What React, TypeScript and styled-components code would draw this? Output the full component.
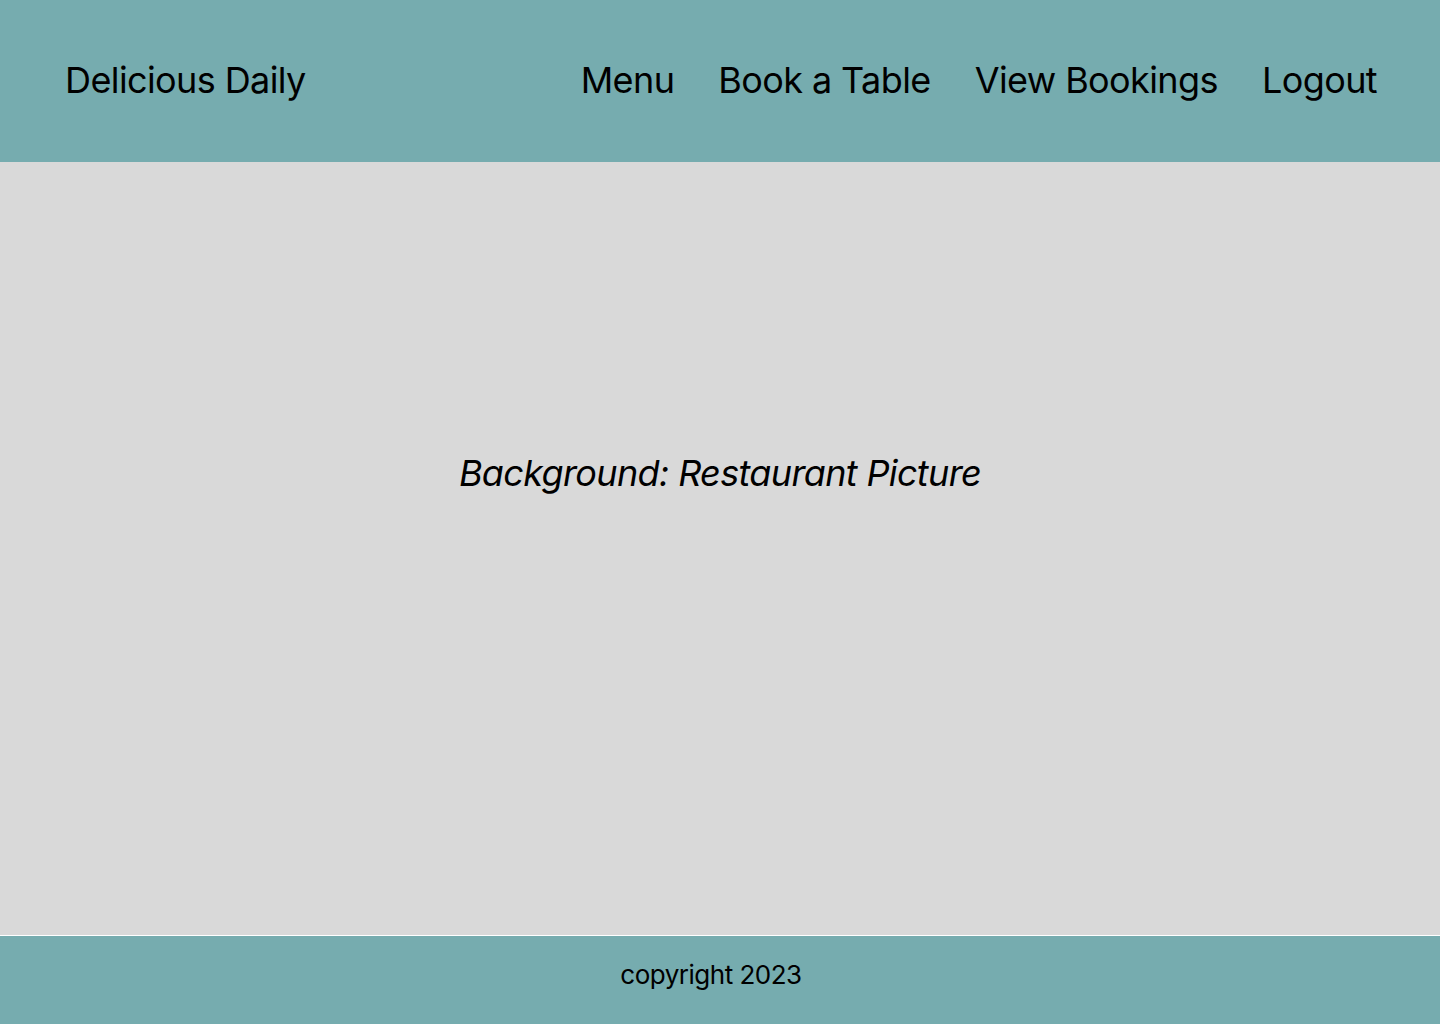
import React from "react";
import styled, { createGlobalStyle } from "styled-components";

const Global = createGlobalStyle`
  html, body { margin: 0; padding: 0; }
  body { font-family: Inter, "Noto Sans", sans-serif; color: #000; background: #d9d9d9; }
  * { box-sizing: border-box; }
`;

const Page = styled.div`
  display: flex;
  flex-direction: column;
  height: 1024px;
  width: 1440px;
`;

const Header = styled.header`
  height: 162px;
  background: #76acaf;
  display: flex;
  align-items: center;
  justify-content: space-between;
  padding: 0 63px 2px 65px;
  flex-shrink: 0;
`;

const Brand = styled.div`
  font-size: 36px;
  line-height: 1;
  font-weight: 400;
  letter-spacing: -0.6px;
`;

const Nav = styled.nav`
  display: flex;
  gap: 44px;
`;

const NavLink = styled.a`
  font-size: 36px;
  line-height: 1;
  color: #000;
  text-decoration: none;
  letter-spacing: -0.6px;
`;

const Main = styled.main`
  flex: 1;
  background: #d9d9d9;
  display: flex;
  justify-content: center;
  padding-top: 293px;
`;

const Placeholder = styled.p`
  margin: 0;
  font-size: 36px;
  font-style: italic;
  line-height: 36px;
  letter-spacing: -0.65px;
`;

const Footer = styled.footer`
  height: 89px;
  background: #76acaf;
  border-top: 1px solid #ffffff;
  display: flex;
  align-items: center;
  justify-content: center;
  flex-shrink: 0;
  padding: 0 18px 12px 0;
  font-size: 26px;
  letter-spacing: -0.5px;
`;

export default function App() {
  return (
    <Page>
      <Global />
      <Header>
        <Brand>Delicious Daily</Brand>
        <Nav>
          <NavLink href="#">Menu</NavLink>
          <NavLink href="#">Book a Table</NavLink>
          <NavLink href="#">View Bookings</NavLink>
          <NavLink href="#">Logout</NavLink>
        </Nav>
      </Header>
      <Main>
        <Placeholder>Background: Restaurant Picture</Placeholder>
      </Main>
      <Footer>copyright 2023</Footer>
    </Page>
  );
}
